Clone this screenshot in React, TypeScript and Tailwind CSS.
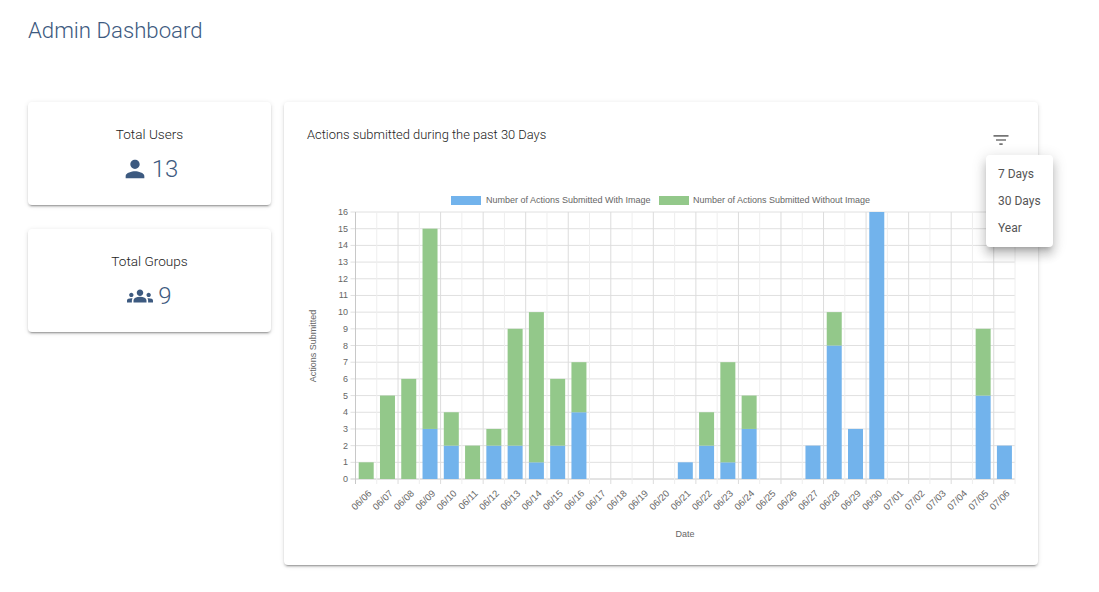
const cardShadow = 'shadow-[0_3px_1px_-2px_rgba(0,0,0,0.2),0_2px_2px_0_rgba(0,0,0,0.14),0_1px_5px_0_rgba(0,0,0,0.12)]'

const dates = [
  '06/06', '06/07', '06/08', '06/09', '06/10', '06/11', '06/12', '06/13', '06/14', '06/15', '06/16',
  '06/17', '06/18', '06/19', '06/20', '06/21', '06/22', '06/23', '06/24', '06/25', '06/26', '06/27',
  '06/28', '06/29', '06/30', '07/01', '07/02', '07/03', '07/04', '07/05', '07/06',
]

// [with image, without image], same order as dates
const counts = [
  [0, 1], [0, 5], [0, 6], [3, 12], [2, 2], [0, 2], [2, 1], [2, 7], [1, 9], [2, 4], [4, 3],
  [0, 0], [0, 0], [0, 0], [0, 0], [1, 0], [2, 2], [1, 6], [3, 2], [0, 0], [0, 0], [2, 0],
  [8, 2], [3, 0], [16, 0], [0, 0], [0, 0], [0, 0], [0, 0], [5, 4], [2, 0],
]

const left = 355.5
const right = 1015
const top = 212
const bottom = 479
const stepX = (right - left) / dates.length
const stepY = (bottom - top) / 16

function Chart() {
  const y = (v: number) => bottom - v * stepY
  return (
    <svg viewBox="300 190 730 360" width={730} height={360} className="block" fontFamily="'Liberation Sans', Arial, sans-serif" fill="#666">
      <rect x={451} y={196} width={30} height={9} fill="#72b3ec" />
      <text x={486} y={203} fontSize={9}>Number of Actions Submitted With Image</text>
      <rect x={659} y={196} width={30} height={9} fill="#93c88a" />
      <text x={693} y={203} fontSize={9}>Number of Actions Submitted Without Image</text>

      {Array.from({ length: 17 }, (_, i) => (
        <g key={i}>
          <line x1={left - 5} x2={right} y1={y(i)} y2={y(i)} stroke={i === 0 ? '#c8c8c8' : '#e0e0e0'} />
          <text x={348} y={y(i) + 3} fontSize={9} textAnchor="end">{i}</text>
        </g>
      ))}
      {Array.from({ length: dates.length + 1 }, (_, i) => {
        const x = left + i * stepX
        return <line key={i} x1={x} x2={x} y1={top} y2={bottom + 5} stroke={i === 0 ? '#c8c8c8' : i % 2 ? '#eeeeee' : '#dcdcdc'} />
      })}

      {counts.map(([withImage, withoutImage], i) => {
        const x = left + i * stepX + 3.2
        return (
          <g key={dates[i]}>
            {withImage > 0 && <rect x={x} y={y(withImage)} width={15} height={withImage * stepY} fill="#72b3ec" />}
            {withoutImage > 0 && <rect x={x} y={y(withImage + withoutImage)} width={15} height={withoutImage * stepY} fill="#93c88a" />}
          </g>
        )
      })}

      {dates.map((d, i) => {
        const x = left + i * stepX + stepX / 2 + 6
        return (
          <text key={d} x={x} y={494} fontSize={9.5} textAnchor="end" transform={`rotate(-45 ${x} 494)`}>{d}</text>
        )
      })}

      <text x={685} y={537} fontSize={9} textAnchor="middle">Date</text>
      <text x={316} y={346} fontSize={9} textAnchor="middle" transform="rotate(-90 316 346)">Actions Submitted</text>
    </svg>
  )
}

function StatCard({ label, value, icon }: { label: string; value: number; icon: React.ReactNode }) {
  return (
    <div className={`flex h-[103px] flex-col items-center rounded-[4px] bg-white pt-[22px] ${cardShadow}`}>
      <p className="text-[13.6px] leading-5 font-light text-[#222]">{label}</p>
      <div className="mt-[13px] flex h-6 items-center text-[#3d5a80]">
        {icon}
        <span className="text-[24px] leading-6 font-light">{value}</span>
      </div>
    </div>
  )
}

export default function App() {
  return (
    <div className="relative h-[592px] w-[1099px] overflow-hidden bg-white pl-7 font-['Roboto',sans-serif]">
      <h1 className="pt-4 text-[22.2px] leading-7 font-light text-[#3d5a80]">Admin Dashboard</h1>

      <div className="mt-[58px] flex gap-[13px]">
        <div className="flex w-[243px] flex-col gap-6">
          <StatCard
            label="Total Users"
            value={13}
            icon={
              <svg viewBox="0 0 24 24" width={28} height={28} fill="currentColor" className="mr-[3px]">
                <path d="M12 12c2.21 0 4-1.79 4-4s-1.79-4-4-4-4 1.79-4 4 1.79 4 4 4zm0 2c-2.67 0-8 1.34-8 4v2h16v-2c0-2.66-5.33-4-8-4z" />
              </svg>
            }
          />
          <StatCard
            label="Total Groups"
            value={9}
            icon={
              <svg viewBox="0 0 24 24" width={26} height={26} fill="currentColor" className="mr-[5px]">
                <path d="M12 12.75c1.63 0 3.07.39 4.24.9 1.08.48 1.76 1.56 1.76 2.73V18H6v-1.61c0-1.18.68-2.26 1.76-2.73 1.17-.52 2.61-.91 4.24-.91zM4 13c1.1 0 2-.9 2-2s-.9-2-2-2-2 .9-2 2 .9 2 2 2zm1.13 1.1c-.37-.06-.74-.1-1.13-.1-.99 0-1.93.21-2.78.58C.48 14.9 0 15.62 0 16.43V18h4.5v-1.61c0-.83.23-1.61.63-2.29zM20 13c1.1 0 2-.9 2-2s-.9-2-2-2-2 .9-2 2 .9 2 2 2zm4 3.43c0-.81-.48-1.53-1.22-1.85-.85-.37-1.79-.58-2.78-.58-.39 0-.76.04-1.13.1.4.68.63 1.46.63 2.29V18H24v-1.57zM12 6c1.66 0 3 1.34 3 3s-1.34 3-3 3-3-1.34-3-3 1.34-3 3-3z" />
              </svg>
            }
          />
        </div>

        <div className={`h-[463px] w-[754px] rounded-[4px] bg-white ${cardShadow}`}>
          <div className="flex items-start justify-between pt-[23px] pr-[27px] pl-[23px]">
            <p className="text-[12.9px] leading-5 font-light text-[#222]">Actions submitted during the past 30 Days</p>
            <svg viewBox="0 0 24 24" width={20} height={20} fill="#757575" className="mt-[5px]">
              <path d="M10 18h4v-2h-4v2zM3 6v2h18V6H3zm3 7h12v-2H6v2z" />
            </svg>
          </div>
          <div className="mt-[40px] ml-4">
            <Chart />
          </div>
        </div>
      </div>

      <ul className="absolute top-[155px] left-[986px] flex h-[92px] w-[67px] flex-col rounded-[4px] bg-white pt-[6px] pl-3 text-[12px] leading-[27px] text-[#555] shadow-[0_5px_5px_-3px_rgba(0,0,0,0.2),0_8px_10px_1px_rgba(0,0,0,0.14),0_3px_14px_2px_rgba(0,0,0,0.12)]">
        <li>7 Days</li>
        <li>30 Days</li>
        <li>Year</li>
      </ul>
    </div>
  )
}
